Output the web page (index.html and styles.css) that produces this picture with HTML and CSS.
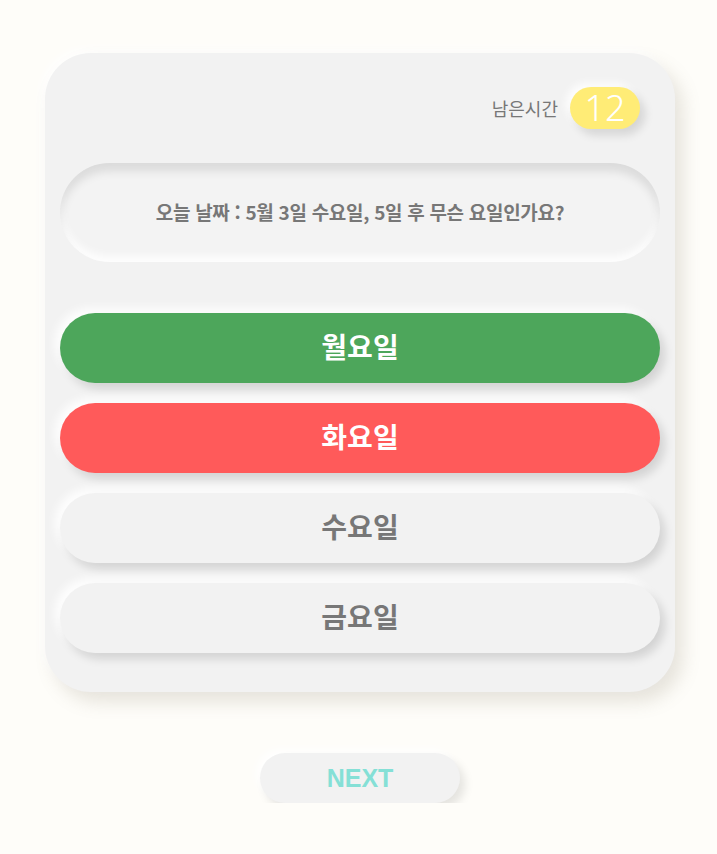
FILE: index.html
```html
<!DOCTYPE html>
<html lang="ko">
<head>
<meta charset="utf-8">
<link rel="stylesheet" href="styles.css">
</head>
<body>
<div class="wrap">
  <div class="card">
    <div class="timer">
      <span class="timer-label">남은시간</span>
      <span class="timer-badge">12</span>
    </div>
    <div class="question">오늘 날짜 : 5월 3일 수요일, 5일 후 무슨 요일인가요?</div>
    <div class="answers">
      <button class="answer correct">월요일</button>
      <button class="answer wrong">화요일</button>
      <button class="answer">수요일</button>
      <button class="answer">금요일</button>
    </div>
  </div>
  <div class="next-row">
    <button class="next">NEXT</button>
  </div>
</div>
</body>
</html>
```
FILE: styles.css
```css
html, body {
  margin: 0;
  padding: 0;
  background: #fefdf9;
  font-family: "Noto Sans CJK KR", "Noto Sans", sans-serif;
}
.wrap {
  width: 630px;
  margin: 53px 0 0 45px;
}
.card {
  background: #f2f2f2;
  border-radius: 46px;
  padding: 34px 15px 39px;
  box-shadow: 8px 10px 18px rgba(120, 110, 90, 0.18), -4px -4px 10px rgba(255, 255, 255, 0.9);
}
.timer {
  display: flex;
  justify-content: flex-end;
  align-items: center;
  gap: 12px;
  padding-right: 20px;
  height: 42px;
}
.timer-label {
  font-size: 18px;
  color: #777;
  letter-spacing: 0;
}
.timer-badge {
  width: 70px;
  height: 42px;
  border-radius: 21px;
  background: #ffec76;
  color: #fff;
  font-family: "Noto Sans", sans-serif;
  font-weight: 300;
  font-size: 36px;
  line-height: 42px;
  text-align: center;
  box-shadow: 5px 6px 10px rgba(0, 0, 0, 0.12), -4px -4px 8px rgba(255, 255, 255, 0.9);
}
.question {
  margin-top: 34px;
  height: 99px;
  box-sizing: border-box;
  padding-bottom: 3px;
  border-radius: 50px;
  background: #f3f3f3;
  display: flex;
  align-items: center;
  justify-content: center;
  font-size: 19px;
  font-weight: 700;
  color: #777;
  letter-spacing: -0.3px;
  box-shadow: inset 0 8px 10px rgba(0, 0, 0, 0.1), inset 0 -6px 8px rgba(255, 255, 255, 0.9);
}
.answers {
  margin-top: 51px;
  display: flex;
  flex-direction: column;
  gap: 20px;
}
.answer {
  height: 70px;
  border: none;
  border-radius: 35px;
  background: #f2f2f2;
  font-family: "Noto Sans CJK KR", "Noto Sans", sans-serif;
  font-size: 28px;
  font-weight: 700;
  color: #777;
  padding: 0 0 4px;
  box-shadow: 5px 6px 10px rgba(0, 0, 0, 0.13), -5px -5px 10px rgba(255, 255, 255, 0.9);
}
.answer.correct {
  background: #4da65b;
  color: #fff;
}
.answer.wrong {
  background: #ff5a5a;
  color: #fff;
}
.next-row {
  display: flex;
  justify-content: center;
  margin-top: 61px;
}
.next {
  width: 200px;
  height: 50px;
  border: none;
  border-radius: 25px;
  background: #f2f2f2;
  color: #85e0d6;
  font-family: "Liberation Sans", Arial, sans-serif;
  font-weight: 700;
  font-size: 25px;
  padding: 0;
  box-shadow: 5px 6px 10px rgba(0, 0, 0, 0.1), -4px -4px 8px rgba(255, 255, 255, 0.9);
}
```
